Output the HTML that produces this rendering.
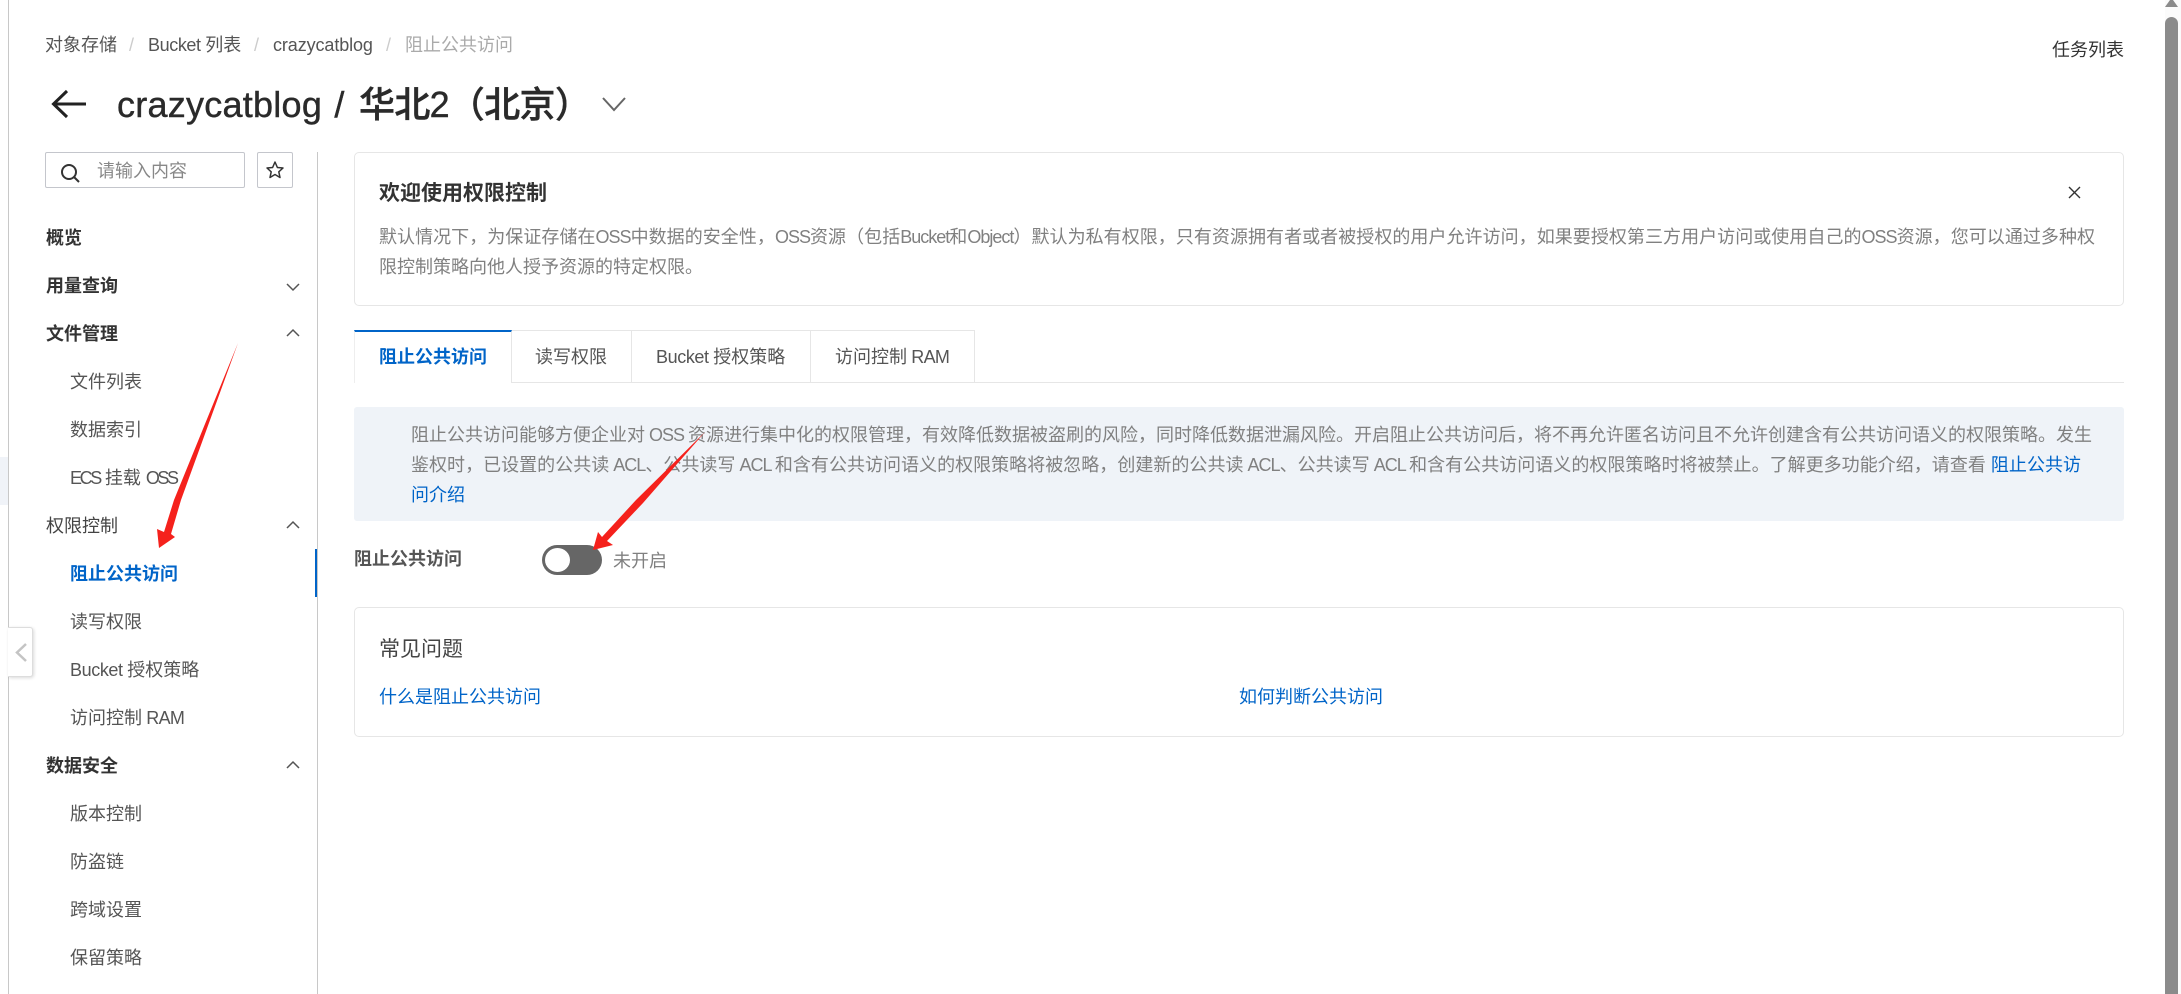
<!DOCTYPE html>
<html lang="zh-CN">
<head>
<meta charset="utf-8">
<title>阻止公共访问</title>
<style>
html,body{margin:0;padding:0;width:2181px;height:994px;overflow:hidden;background:#fff;}
body{position:relative;font-family:"Liberation Sans","Noto Sans CJK SC",sans-serif;font-size:18px;color:#666;}
.t{position:absolute;white-space:nowrap;line-height:30px;height:30px;}
.b{position:absolute;box-sizing:border-box;}
.j{text-align:justify;text-align-last:justify;}
.h{color:#333;font-weight:700;left:46px;}
.i{color:#555;left:70px;}
.l{letter-spacing:-1px;}
.m{letter-spacing:-.7px;}
.s{letter-spacing:-.4px;}
.e{letter-spacing:-2.400px;}
a{color:#0064c8;text-decoration:none;}
svg{position:absolute;overflow:visible;}
</style>
</head>
<body>
<div class="b" style="left:8px;top:0;width:1px;height:994px;background:#c8c8c8"></div>
<div class="b" style="left:0;top:457px;width:8px;height:48px;background:#f0f3f8"></div>

<div class="t" style="left:45px;top:30px;color:#555">对象存储</div>
<div class="t" style="left:129px;top:30px;color:#ccc">/</div>
<div class="t" style="left:148px;top:30px;color:#555"><span class="s">Bucket </span>列表</div>
<div class="t" style="left:254px;top:30px;color:#ccc">/</div>
<div class="t s" style="left:273px;top:30px;color:#555;letter-spacing:-.1px">crazycatblog</div>
<div class="t" style="left:386px;top:30px;color:#ccc">/</div>
<div class="t" style="left:405px;top:30px;color:#aaa">阻止公共访问</div>
<div class="t" style="left:2052px;top:35px;color:#333">任务列表</div>

<svg style="left:52px;top:88px" width="36" height="32" viewBox="0 0 36 32"><path d="M1 16H34M15 3L1.500 16L15 29" fill="none" stroke="#222" stroke-width="3"/></svg>
<div class="t" style="left:117px;top:80px;height:50px;line-height:50px;font-size:36px;font-weight:500;color:#2a2a2a;-webkit-text-stroke:.4px #2a2a2a"><span style="letter-spacing:.25px">crazycatblog</span><span style="letter-spacing:2.300px"> / </span><span style="letter-spacing:-.7px">华北2（北京）</span></div>
<svg style="left:602px;top:96px" width="24" height="16" viewBox="0 0 24 16"><path d="M1 2L12 14L23 2" fill="none" stroke="#666" stroke-width="2"/></svg>

<div class="b" style="left:45px;top:152px;width:200px;height:36px;border:1px solid #c4c6cc;border-radius:2px"></div>
<svg style="left:60px;top:163px" width="20" height="20" viewBox="0 0 20 20"><circle cx="9" cy="9" r="7" fill="none" stroke="#333" stroke-width="2"/><path d="M14 14L19 19" stroke="#333" stroke-width="2"/></svg>
<div class="t" style="left:97px;top:156px;color:#888">请输入内容</div>
<div class="b" style="left:257px;top:152px;width:36px;height:36px;border:1px solid #c4c6cc;border-radius:2px"></div>
<svg style="left:266px;top:161px" width="18" height="18" viewBox="0 0 18 18"><path d="M9 1L11.400 6.500L17 7L12.800 10.800L14 16.500L9 13.500L4 16.500L5.200 10.800L1 7L6.600 6.500Z" fill="none" stroke="#333" stroke-width="1.500" stroke-linejoin="round"/></svg>
<div class="b" style="left:317px;top:152px;width:1px;height:842px;background:#c8c8c8"></div>

<div class="t h" style="top:223px">概览</div>
<div class="t h" style="top:271px">用量查询</div>
<div class="t h" style="top:319px">文件管理</div>
<div class="t i" style="top:367px">文件列表</div>
<div class="t i" style="top:415px">数据索引</div>
<div class="t i" style="top:463px"><span class="e">ECS</span> 挂载 <span class="e">OSS</span></div>
<div class="t" style="left:46px;top:511px;color:#444">权限控制</div>
<div class="t" style="left:70px;top:559px;color:#0064c8;font-weight:700">阻止公共访问</div>
<div class="t i" style="top:607px">读写权限</div>
<div class="t i" style="top:655px"><span class="s">Bucket </span>授权策略</div>
<div class="t i" style="top:703px">访问控制<span class="m"> RAM</span></div>
<div class="t h" style="top:751px">数据安全</div>
<div class="t i" style="top:799px">版本控制</div>
<div class="t i" style="top:847px">防盗链</div>
<div class="t i" style="top:895px">跨域设置</div>
<div class="t i" style="top:943px">保留策略</div>

<svg style="left:0;top:0" width="320" height="800">
<g fill="none" stroke="#555" stroke-width="1.500">
<path d="M287 284L293 290L299 284"/>
<path d="M287 336L293 330L299 336"/>
<path d="M287 528L293 522L299 528"/>
<path d="M287 768L293 762L299 768"/>
</g>
</svg>
<div class="b" style="left:315px;top:549px;width:2px;height:48px;background:#0064c8"></div>

<div class="b" style="left:8px;top:627px;width:25px;height:50px;background:#fff;border:1px solid #ddd;border-left:0;border-radius:0 3px 3px 0;box-shadow:1px 1px 3px rgba(0,0,0,.15)"></div>
<svg style="left:15px;top:643px" width="12" height="20" viewBox="0 0 12 20"><path d="M11 1L2 9.500L11 18" fill="none" stroke="#c4c4c4" stroke-width="2.500"/></svg>

<div class="b" style="left:354px;top:152px;width:1770px;height:154px;border:1px solid #e6e6e6;border-radius:5px"></div>
<div class="t" style="left:379px;top:179px;font-size:21px;font-weight:700;color:#333">欢迎使用权限控制</div>
<svg style="left:2068px;top:186px" width="13" height="13" viewBox="0 0 13 13"><path d="M1 1L12 12M12 1L1 12" stroke="#333" stroke-width="1.400"/></svg>
<div class="t j" style="left:379px;top:222px;width:1716px;color:#808080">默认情况下，为保证存储在<span class="l">OSS</span>中数据的安全性，<span class="l">OSS</span>资源（包括<span class="l">Bucket</span>和<span class="l">Object</span>）默认为私有权限，只有资源拥有者或者被授权的用户允许访问，如果要授权第三方用户访问或使用自己的<span class="l">OSS</span>资源，您可以通过多种权</div>
<div class="t" style="left:379px;top:252px;color:#808080">限控制策略向他人授予资源的特定权限。</div>

<div class="b" style="left:354px;top:382px;width:1770px;height:1px;background:#e6e6e6"></div>
<div class="b" style="left:354px;top:330px;width:158px;height:53px;background:#fff;border-top:2px solid #0064c8;border-right:1px solid #e6e6e6;border-left:1px solid #eee"></div>
<div class="b" style="left:512px;top:330px;width:120px;height:53px;border:1px solid #e6e6e6;border-left:0"></div>
<div class="b" style="left:632px;top:330px;width:179px;height:53px;border:1px solid #e6e6e6;border-left:0"></div>
<div class="b" style="left:811px;top:330px;width:164px;height:53px;border:1px solid #e6e6e6;border-left:0"></div>
<div class="t" style="left:379px;top:342px;color:#0064c8;font-weight:700">阻止公共访问</div>
<div class="t" style="left:535px;top:342px;color:#555">读写权限</div>
<div class="t" style="left:656px;top:342px;color:#555"><span class="s">Bucket </span>授权策略</div>
<div class="t" style="left:835px;top:342px;color:#555">访问控制<span class="m"> RAM</span></div>

<div class="b" style="left:354px;top:407px;width:1770px;height:114px;background:#eff3f8;border-radius:3px"></div>
<div class="t j" style="left:411px;top:420px;width:1680px;color:#808080">阻止公共访问能够方便企业对<span class="l"> OSS </span>资源进行集中化的权限管理，有效降低数据被盗刷的风险，同时降低数据泄漏风险。开启阻止公共访问后，将不再允许匿名访问且不允许创建含有公共访问语义的权限策略。发生</div>
<div class="t j" style="left:411px;top:450px;width:1670px;color:#808080">鉴权时，已设置的公共读<span class="l"> ACL</span>、公共读写<span class="l"> ACL </span>和含有公共访问语义的权限策略将被忽略，创建新的公共读<span class="l"> ACL</span>、公共读写<span class="l"> ACL </span>和含有公共访问语义的权限策略时将被禁止。了解更多功能介绍，请查看 <a href="#">阻止公共访</a></div>
<div class="t" style="left:411px;top:480px"><a href="#">问介绍</a></div>

<div class="t" style="left:354px;top:544px;color:#555;font-weight:700">阻止公共访问</div>
<div class="b" style="left:542px;top:545px;width:60px;height:30px;background:#666;border-radius:15px"></div>
<div class="b" style="left:545px;top:548px;width:25px;height:24px;background:#fff;border-radius:50%"></div>
<div class="t" style="left:613px;top:546px;color:#808080">未开启</div>

<div class="b" style="left:354px;top:607px;width:1770px;height:130px;border:1px solid #e6e6e6;border-radius:5px"></div>
<div class="t" style="left:379px;top:635px;font-size:21px;color:#444">常见问题</div>
<div class="t" style="left:379px;top:682px"><a href="#">什么是阻止公共访问</a></div>
<div class="t" style="left:1239px;top:682px"><a href="#">如何判断公共访问</a></div>

<svg style="left:0;top:0" width="2181" height="994">
<path d="M238 343L181 500L171 534L175 537L159 548L157 529L164 532L174 500Z" fill="#f5211c"/>
<path d="M705 432L643 503L607 541L613 545L593 550L598 532L602 537L636 500Z" fill="#f5211c"/>
</svg>

<div class="b" style="left:2165px;top:0;width:16px;height:994px;background:#fbfbfb"></div>
<div class="b" style="left:2165px;top:17px;width:13px;height:977px;background:#8b8b8b;border-radius:7px 7px 0 0"></div>
<svg style="left:2165px;top:0" width="13" height="8" viewBox="0 0 13 8"><path d="M0 7L5 0H8L13 7Z" fill="#8b8b8b"/></svg>
</body>
</html>
